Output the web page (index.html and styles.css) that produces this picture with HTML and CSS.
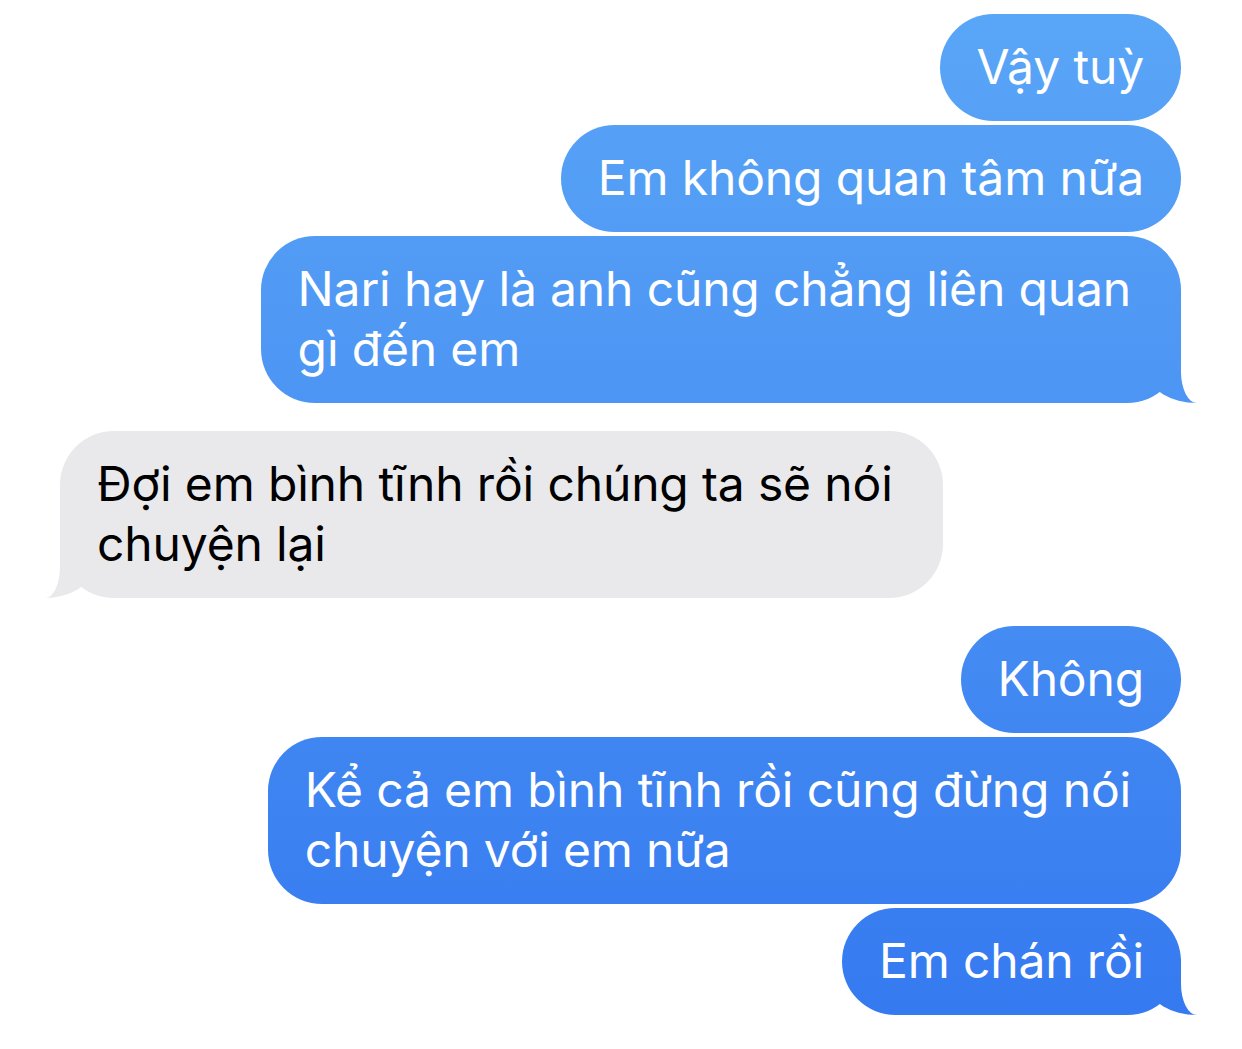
FILE: index.html
```html
<!DOCTYPE html>
<html lang="vi">
<head>
<meta charset="utf-8">
<title>Messages</title>
<link rel="stylesheet" href="styles.css">
</head>
<body>
<main class="thread">
  <div class="group sent">
    <div class="bubble">Vậy tuỳ</div>
    <div class="bubble">Em không quan tâm nữa</div>
    <div class="bubble multi tail">Nari hay là anh cũng chẳng liên quan<br>gì đến em</div>
  </div>
  <div class="group received">
    <div class="bubble multi tail">Đợi em bình tĩnh rồi chúng ta sẽ nói<br>chuyện lại</div>
  </div>
  <div class="group sent">
    <div class="bubble">Không</div>
    <div class="bubble multi">Kể cả em bình tĩnh rồi cũng đừng nói<br>chuyện với em nữa</div>
    <div class="bubble tail">Em chán rồi</div>
  </div>
</main>
</body>
</html>
```

FILE: styles.css
```css
html, body {
  margin: 0;
  padding: 0;
  background: #ffffff;
}

body {
  width: 1242px;
  height: 1049px;
  overflow: hidden;
  font-family: Inter, "Noto Sans", "Liberation Sans", sans-serif;
}

.thread {
  display: flex;
  flex-direction: column;
  gap: 28px;
  padding: 14px 61px 0 60px;
}

.group {
  display: flex;
  flex-direction: column;
  gap: 4px;
}

.sent {
  align-items: flex-end;
}

.received {
  align-items: flex-start;
}

.bubble {
  position: relative;
  box-sizing: border-box;
  padding: 23px 37px 24px 37px;
  border-radius: 54px;
  font-size: 48px;
  line-height: 60px;
  letter-spacing: -0.15px;
  white-space: nowrap;
}

.bubble.multi {
  padding-right: 50px;
}

.sent .bubble {
  color: #ffffff;
  background: linear-gradient(180deg, #5aa6f7 0%, #4890f3 50%, #3478f0 100%) fixed;
}

.received .bubble {
  color: #000000;
  background: #e9e9eb;
  padding-left: 37px;
}

.bubble.tail::before {
  content: "";
  position: absolute;
  bottom: 0;
  width: 52px;
  height: 56px;
}

.sent .bubble.tail::before {
  right: -20px;
  background: linear-gradient(180deg, #5aa6f7 0%, #4890f3 50%, #3478f0 100%) fixed;
  border-bottom-left-radius: 48px 30px;
}

.received .bubble.tail::before {
  left: -20px;
  background: #e9e9eb;
  border-bottom-right-radius: 48px 30px;
}

.bubble.tail::after {
  content: "";
  position: absolute;
  bottom: 0;
  width: 30px;
  height: 56px;
  background: #ffffff;
}

.sent .bubble.tail::after {
  left: 100%;
  border-bottom-left-radius: 16px 31px;
}

.received .bubble.tail::after {
  right: 100%;
  border-bottom-right-radius: 15px 31px;
}
```
